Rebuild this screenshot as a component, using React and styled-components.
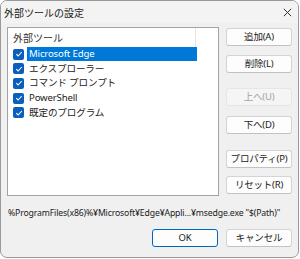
import React from 'react';
import styled, { createGlobalStyle } from 'styled-components';

const GlobalStyle = createGlobalStyle`
  html, body {
    margin: 0;
    padding: 0;
    background: #ffffff;
  }
  body {
    font-family: "Noto Sans", "Noto Sans CJK JP", sans-serif;
  }
`;

const Window = styled.div`
  box-sizing: border-box;
  width: 299px;
  height: 258px;
  border: 1px solid #9a9a9a;
  border-radius: 7px;
  background: #f0f0f0;
  display: flex;
  flex-direction: column;
  overflow: hidden;
  font-size: 10px;
  color: #1b1b1b;
`;

const TitleBar = styled.div`
  height: 22px;
  display: flex;
  align-items: center;
  justify-content: space-between;
  padding: 0 6px 0 3px;
  background: #f3f3f3;
`;

const Title = styled.span`
  font-size: 10px;
  font-family: "Noto Sans CJK JP", sans-serif;
  color: #1a1a1a;
`;

const Body = styled.div`
  display: flex;
  gap: 7px;
  padding: 4px 0 0 6px;
`;

const ListBox = styled.div`
  box-sizing: border-box;
  width: 212px;
  height: 169px;
  border: 1px solid #a3a3a3;
  background: #ffffff;
  display: flex;
  flex-direction: column;
`;

const Header = styled.div`
  height: 19px;
  display: flex;
  align-items: center;
`;

const HeaderCell = styled.div`
  box-sizing: border-box;
  width: 188px;
  height: 100%;
  padding-left: 5px;
  display: flex;
  align-items: center;
  border-right: 1px solid #e5e5e5;
  font-family: "Noto Sans CJK JP", sans-serif;
  color: #333;
`;

const Row = styled.div`
  height: 14.6px;
  display: flex;
  align-items: center;
  padding-left: 5px;
`;

const Check = styled.span`
  width: 11px;
  height: 11px;
  border-radius: 2px;
  background: #0a5ebd;
  display: flex;
  align-items: center;
  justify-content: center;
  flex-shrink: 0;
`;

const Label = styled.span`
  margin-left: 3px;
  height: 14px;
  line-height: 14px;
  padding: 0 2px;
  width: ${p => (p.selected ? '166px' : 'auto')};
  background: ${p => (p.selected ? '#0078d7' : 'transparent')};
  color: ${p => (p.selected ? '#ffffff' : '#1b1b1b')};
  font-family: "Noto Sans", "Noto Sans CJK JP", sans-serif;
  font-size: 9.6px;
  letter-spacing: -0.15px;
  white-space: nowrap;
`;

const ButtonColumn = styled.div`
  display: flex;
  flex-direction: column;
  padding-top: 1px;
`;

const Button = styled.button`
  box-sizing: border-box;
  width: 66px;
  height: 18px;
  margin-top: ${p => p.gap || 0}px;
  padding: 0;
  border: 1px solid ${p => (p.disabled ? '#e6e6e6' : p.primary ? '#0067c0' : '#d4d4d4')};
  border-bottom-color: ${p => (p.disabled ? '#e6e6e6' : p.primary ? '#0067c0' : '#c2c2c2')};
  border-radius: 3px;
  background: ${p => (p.disabled ? '#f5f5f5' : '#fdfdfd')};
  color: ${p => (p.disabled ? '#a3a3a3' : '#1b1b1b')};
  font-family: "Noto Sans", "Noto Sans CJK JP", sans-serif;
  font-size: 9.5px;
  letter-spacing: -0.2px;
  line-height: 1;
`;

const PathText = styled.div`
  margin-top: 11px;
  padding-left: 7px;
  font-size: 8.7px;
  letter-spacing: -0.15px;
  white-space: nowrap;
  color: #1b1b1b;
`;

const Footer = styled.div`
  display: flex;
  justify-content: flex-end;
  gap: 8px;
  padding: 10px 6px 0 0;
`;

const CheckMark = () => (
  <svg width="8" height="8" viewBox="0 0 8 8">
    <path d="M1.3 4.2 L3.1 6 L6.8 2" fill="none" stroke="#fff" strokeWidth="1.1" />
  </svg>
);

const CloseIcon = () => (
  <svg width="9" height="9" viewBox="0 0 9 9">
    <path d="M0.8 0.8 L8.2 8.2 M8.2 0.8 L0.8 8.2" stroke="#333" strokeWidth="1" />
  </svg>
);

const tools = [
  { name: 'Microsoft Edge', selected: true },
  { name: 'エクスプローラー' },
  { name: 'コマンド プロンプト' },
  { name: 'PowerShell' },
  { name: '既定のプログラム' },
];

export default function App() {
  return (
    <>
      <GlobalStyle />
      <Window>
        <TitleBar>
          <Title>外部ツールの設定</Title>
          <CloseIcon />
        </TitleBar>
        <Body>
          <ListBox>
            <Header>
              <HeaderCell>外部ツール</HeaderCell>
            </Header>
            {tools.map(t => (
              <Row key={t.name}>
                <Check>
                  <CheckMark />
                </Check>
                <Label selected={t.selected}>{t.name}</Label>
              </Row>
            ))}
          </ListBox>
          <ButtonColumn>
            <Button>追加(A)</Button>
            <Button gap={9}>削除(L)</Button>
            <Button gap={15} disabled>上へ(U)</Button>
            <Button gap={10}>下へ(D)</Button>
            <Button gap={16}>プロパティ(P)</Button>
            <Button gap={8}>リセット(R)</Button>
          </ButtonColumn>
        </Body>
        <PathText>%ProgramFiles(x86)%¥Microsoft¥Edge¥Appli...¥msedge.exe "$(Path)"</PathText>
        <Footer>
          <Button primary>OK</Button>
          <Button>キャンセル</Button>
        </Footer>
      </Window>
    </>
  );
}
